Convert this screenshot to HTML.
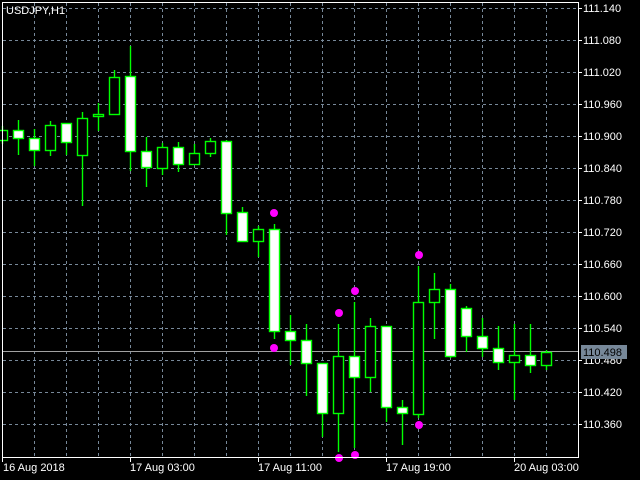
<!DOCTYPE html>
<html><head><meta charset="utf-8"><style>
html,body{margin:0;padding:0;background:#000;width:640px;height:480px;overflow:hidden}
svg text{font-family:"Liberation Sans",sans-serif;font-size:11px;fill:#fff}
</style></head><body>
<svg width="640" height="480" xmlns="http://www.w3.org/2000/svg">
<rect width="640" height="480" fill="#000"/>
<g stroke="#778899" stroke-width="1" stroke-dasharray="3,3" fill="none">
<path d="M3 8.5H578M3 40.5H578M3 72.5H578M3 104.5H578M3 136.5H578M3 168.5H578M3 200.5H578M3 232.5H578M3 264.5H578M3 296.5H578M3 328.5H578M3 360.5H578M3 392.5H578M3 424.5H578"/>
<path d="M34.5 3V457M66.5 3V457M98.5 3V457M130.5 3V457M162.5 3V457M194.5 3V457M226.5 3V457M258.5 3V457M290.5 3V457M322.5 3V457M354.5 3V457M386.5 3V457M418.5 3V457M450.5 3V457M482.5 3V457M514.5 3V457M546.5 3V457"/>
</g>
<line x1="3" y1="351.5" x2="578" y2="351.5" stroke="#a0a0a0"/>
<g id="c" stroke="#00ff00" stroke-width="1.4"></g>
<g fill="#ff00ff" id="d"></g>
<rect x="2.5" y="2.5" width="576" height="455" fill="none" stroke="#fff"/>
<g stroke="#fff"><path d="M578 8.5h4M578 40.5h4M578 72.5h4M578 104.5h4M578 136.5h4M578 168.5h4M578 200.5h4M578 232.5h4M578 264.5h4M578 296.5h4M578 328.5h4M578 360.5h4M578 392.5h4M578 424.5h4M2.5 457v5M130.5 457v5M258.5 457v5M386.5 457v5M514.5 457v5"/></g>
<g>
<text x="583" y="12">111.140</text><text x="583" y="44">111.080</text><text x="583" y="76">111.020</text><text x="583" y="108">110.960</text><text x="583" y="140">110.900</text><text x="583" y="172">110.840</text><text x="583" y="204">110.780</text><text x="583" y="236">110.720</text><text x="583" y="268">110.660</text><text x="583" y="300">110.600</text><text x="583" y="332">110.540</text><text x="583" y="364">110.480</text><text x="583" y="396">110.420</text><text x="583" y="428">110.360</text>
</g>
<rect x="581" y="345" width="46" height="14" fill="#778899"/>
<text x="583" y="356" style="fill:#000">110.498</text>
<text x="6" y="14">USDJPY,H1</text>
<text x="3" y="471">16 Aug 2018</text><text x="130" y="471">17 Aug 03:00</text><text x="258" y="471">17 Aug 11:00</text><text x="386" y="471">17 Aug 19:00</text><text x="514" y="471">20 Aug 03:00</text>
</svg>
<script>
var C=[[2,130,140,0,126,144],[18,130,138,1,120,155],[34,138,150,1,129,166],[50,125,150,0,121,156],[66,123,142,1,123,155],[82,118,155,0,112,206],[98,114,116,0,103,131],[114,77,114,0,70,114],[130,76,151,1,46,171],[146,151,167,1,137,187],[162,147,168,0,143,175],[178,147,164,1,142,172],[194,153,164,0,144,165],[210,141,153,0,138,157],[226,141,213,1,140,235],[242,212,241,1,207,241],[258,229,241,0,226,257],[274,229,331,1,224,339],[290,331,340,1,315,365],[306,340,363,1,324,396],[322,363,413,1,363,437],[338,356,413,0,324,452],[354,356,377,1,302,448],[370,326,377,0,318,392],[386,326,407,1,326,422],[402,407,413,1,400,445],[418,302,414,0,266,418],[434,289,302,0,273,339],[450,289,356,1,284,358],[466,308,336,1,306,352],[482,336,348,1,318,357],[498,348,362,1,326,370],[514,355,362,0,324,400],[530,355,365,1,324,373],[546,352,365,0,350,370]];
var ns="http://www.w3.org/2000/svg",g=document.getElementById('c'),s='';
C.forEach(function(c){var x=c[0]+0.5;s+='<line x1="'+x+'" y1="'+c[4]+'" x2="'+x+'" y2="'+c[5]+'"/>';s+='<rect x="'+(c[0]-4.5)+'" y="'+(c[1]+0.5)+'" width="10" height="'+Math.max(1,c[2]-c[1])+'" fill="'+(c[3]?'#fff':'#000')+'"/>';});
g.innerHTML=s;
var D=[[274,213],[274,348],[339,313],[355,291],[419,255],[419,425],[355,455],[339,458]],t='';
D.forEach(function(d){t+='<circle cx="'+d[0]+'" cy="'+d[1]+'" r="4"/>';});
document.getElementById('d').innerHTML=t;
</script>
</body></html>
